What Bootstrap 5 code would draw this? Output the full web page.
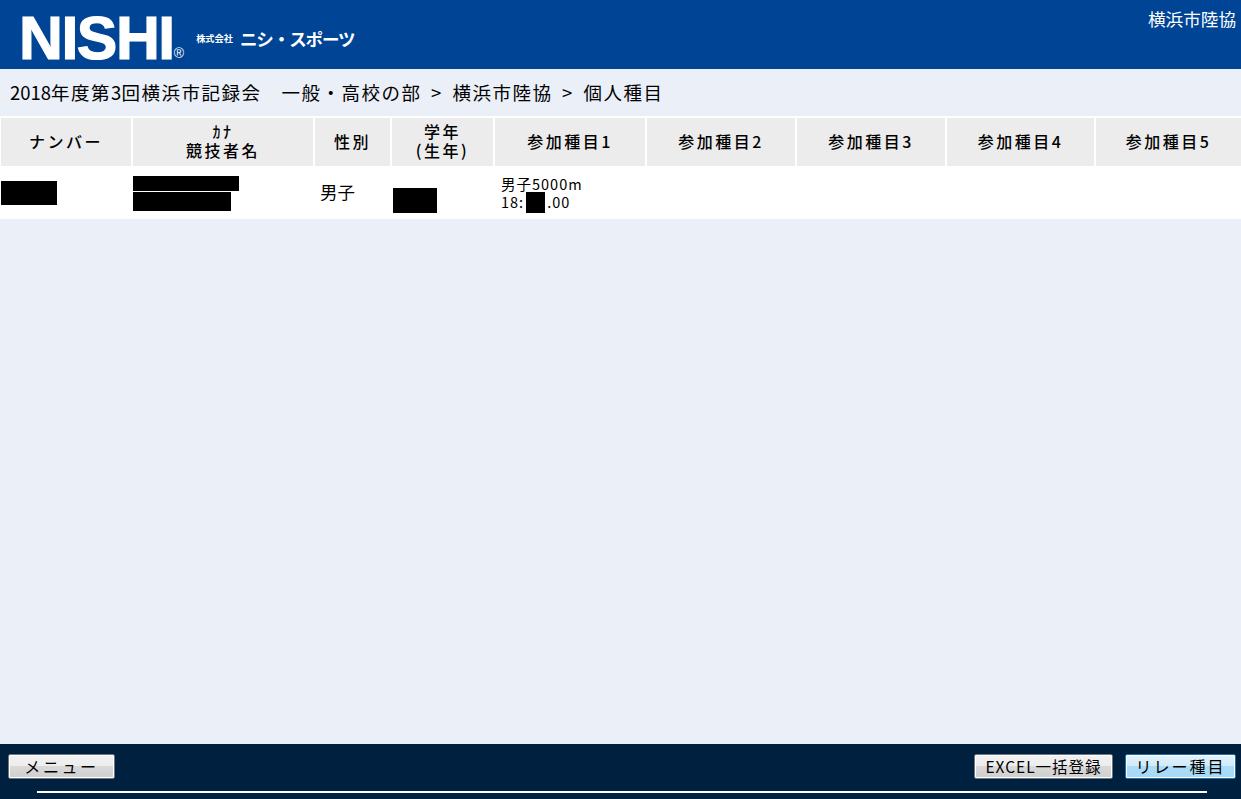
<!DOCTYPE html>
<html lang="ja">
<head>
<meta charset="utf-8">
<title>個人種目</title>
<link href="https://cdn.jsdelivr.net/npm/bootstrap@5.3.0/dist/css/bootstrap.min.css" rel="stylesheet">
<style>
html,body{height:100%;}
body{background:#ebeff7;color:#000;font-family:"Noto Sans CJK JP","Liberation Sans",sans-serif;font-weight:400;overflow:hidden;}
.topbar{background:#004595;height:69px;color:#fff;}
.logo-word{font-family:"Liberation Sans",sans-serif;font-weight:700;font-size:62px;line-height:1;letter-spacing:-1.5px;margin-left:19px;margin-top:7px;transform:scaleX(.98);transform-origin:left;-webkit-text-stroke:1.2px #fff;}
.logo-reg{font-family:"Liberation Sans",sans-serif;font-size:14px;line-height:1;margin-top:46px;margin-left:-3px;}
.logo-kk{font-size:9.2px;font-weight:700;line-height:1;margin-left:12px;margin-top:34px;white-space:nowrap;}
.logo-name{font-size:17.5px;font-weight:700;line-height:1;margin-left:7px;margin-top:30px;white-space:nowrap;letter-spacing:-1.1px;}
.assoc{font-size:17.6px;line-height:1;margin:10px 5px 0 0;}
.crumb{height:47px;padding-left:10px;font-size:18.5px;letter-spacing:1.5px;word-spacing:4px;line-height:47px;white-space:nowrap;}
.nums{letter-spacing:0;}
.entry-table{table-layout:fixed;width:1242px;margin:0 0 0 -1px;border-collapse:collapse;background:#fff;}
.entry-table th{background:#ececec;height:50px;padding:0 0 2px;border:2px solid #fff;font-weight:500;font-size:16px;line-height:19px;letter-spacing:2.5px;text-align:center;vertical-align:middle;}
.entry-table td{height:52px;padding:0;border-left:2px solid #fff;border-right:2px solid #fff;vertical-align:middle;font-size:16px;line-height:1.1;}
.redact{display:block;background:#000;}
.r-num{width:56px;height:24px;margin:-2px 0 0 0;}
.r-kana{width:106px;height:15px;margin:-1px 0 1px 0;}
.r-name{width:98px;height:19px;}
.r-year{width:44px;height:25px;margin:13px 0 0 1px;}
.r-time{display:inline-block;width:19px;height:21px;margin:-1px 2px 0 2px;vertical-align:top;}
.entry-table td.gender{padding:0 0 4px 5px;font-size:17.5px;}
.entry-table td.event{padding:0 0 0 6px;font-size:14.5px;letter-spacing:1px;line-height:18px;white-space:nowrap;}
.bottombar{background:#002040;height:55px;position:relative;}
.act{height:25px;padding:0 0 2px;border-radius:2px;font-size:16px;line-height:20px;color:#000;border:1px solid #6d7580;box-shadow:inset 0 0 0 1px #fff;background:linear-gradient(#f1f1f1 0,#ededed 48%,#d9d9d9 50%,#cfcfcf 100%);white-space:nowrap;letter-spacing:1px;}
.act:hover{color:#000;}
.act-menu{width:107px;letter-spacing:2.6px;}
.act-excel{width:139px;font-size:15.5px;}
.act-relay{width:111px;letter-spacing:2px;border-color:#1d6fa8;background:linear-gradient(#e4f3fc 0,#cfeafa 48%,#abdcf7 50%,#a6daf6 100%);}
.rule{height:2px;background:#fff;margin:12px 34px 0 37px;}
.btn-line{padding:10px 5px 0 8px;}
</style>
</head>
<body class="d-flex flex-column">
<header class="topbar d-flex justify-content-between flex-shrink-0">
  <div class="d-flex align-items-start">
    <div class="logo-word">NISHI</div>
    <div class="logo-reg">®</div>
    <div class="logo-kk">株式会社</div>
    <div class="logo-name">ニシ・スポーツ</div>
  </div>
  <div class="assoc">横浜市陸協</div>
</header>
<div class="crumb flex-shrink-0"><span class="nums">2018</span>年度第<span class="nums">3</span>回横浜市記録会　一般・高校の部 &gt; 横浜市陸協 &gt; 個人種目</div>
<table class="entry-table flex-shrink-0">
  <colgroup>
    <col style="width:132px"><col style="width:182px"><col style="width:77px"><col style="width:103px"><col style="width:152px"><col style="width:150px"><col style="width:150px"><col style="width:149px"><col style="width:147px">
  </colgroup>
  <thead>
    <tr><th>ナンバー</th><th>ｶﾅ<br>競技者名</th><th>性別</th><th>学年<br>(生年)</th><th>参加種目1</th><th>参加種目2</th><th>参加種目3</th><th>参加種目4</th><th>参加種目5</th></tr>
  </thead>
  <tbody>
    <tr>
      <td><span class="redact r-num"></span></td>
      <td><span class="redact r-kana"></span><span class="redact r-name"></span></td>
      <td class="gender">男子</td>
      <td><span class="redact r-year"></span></td>
      <td class="event">男子5000m<br>18:<span class="redact r-time"></span>.00</td>
      <td></td><td></td><td></td><td></td>
    </tr>
  </tbody>
</table>
<div class="flex-grow-1"></div>
<footer class="bottombar flex-shrink-0">
  <div class="btn-line d-flex justify-content-between">
    <button type="button" class="btn act act-menu">メニュー</button>
    <div class="d-flex gap-2">
      <button type="button" class="btn act act-excel me-1">EXCEL一括登録</button>
      <button type="button" class="btn act act-relay">リレー種目</button>
    </div>
  </div>
  <div class="rule"></div>
</footer>
<script src="https://cdn.jsdelivr.net/npm/bootstrap@5.3.0/dist/js/bootstrap.bundle.min.js"></script>
</body>
</html>
